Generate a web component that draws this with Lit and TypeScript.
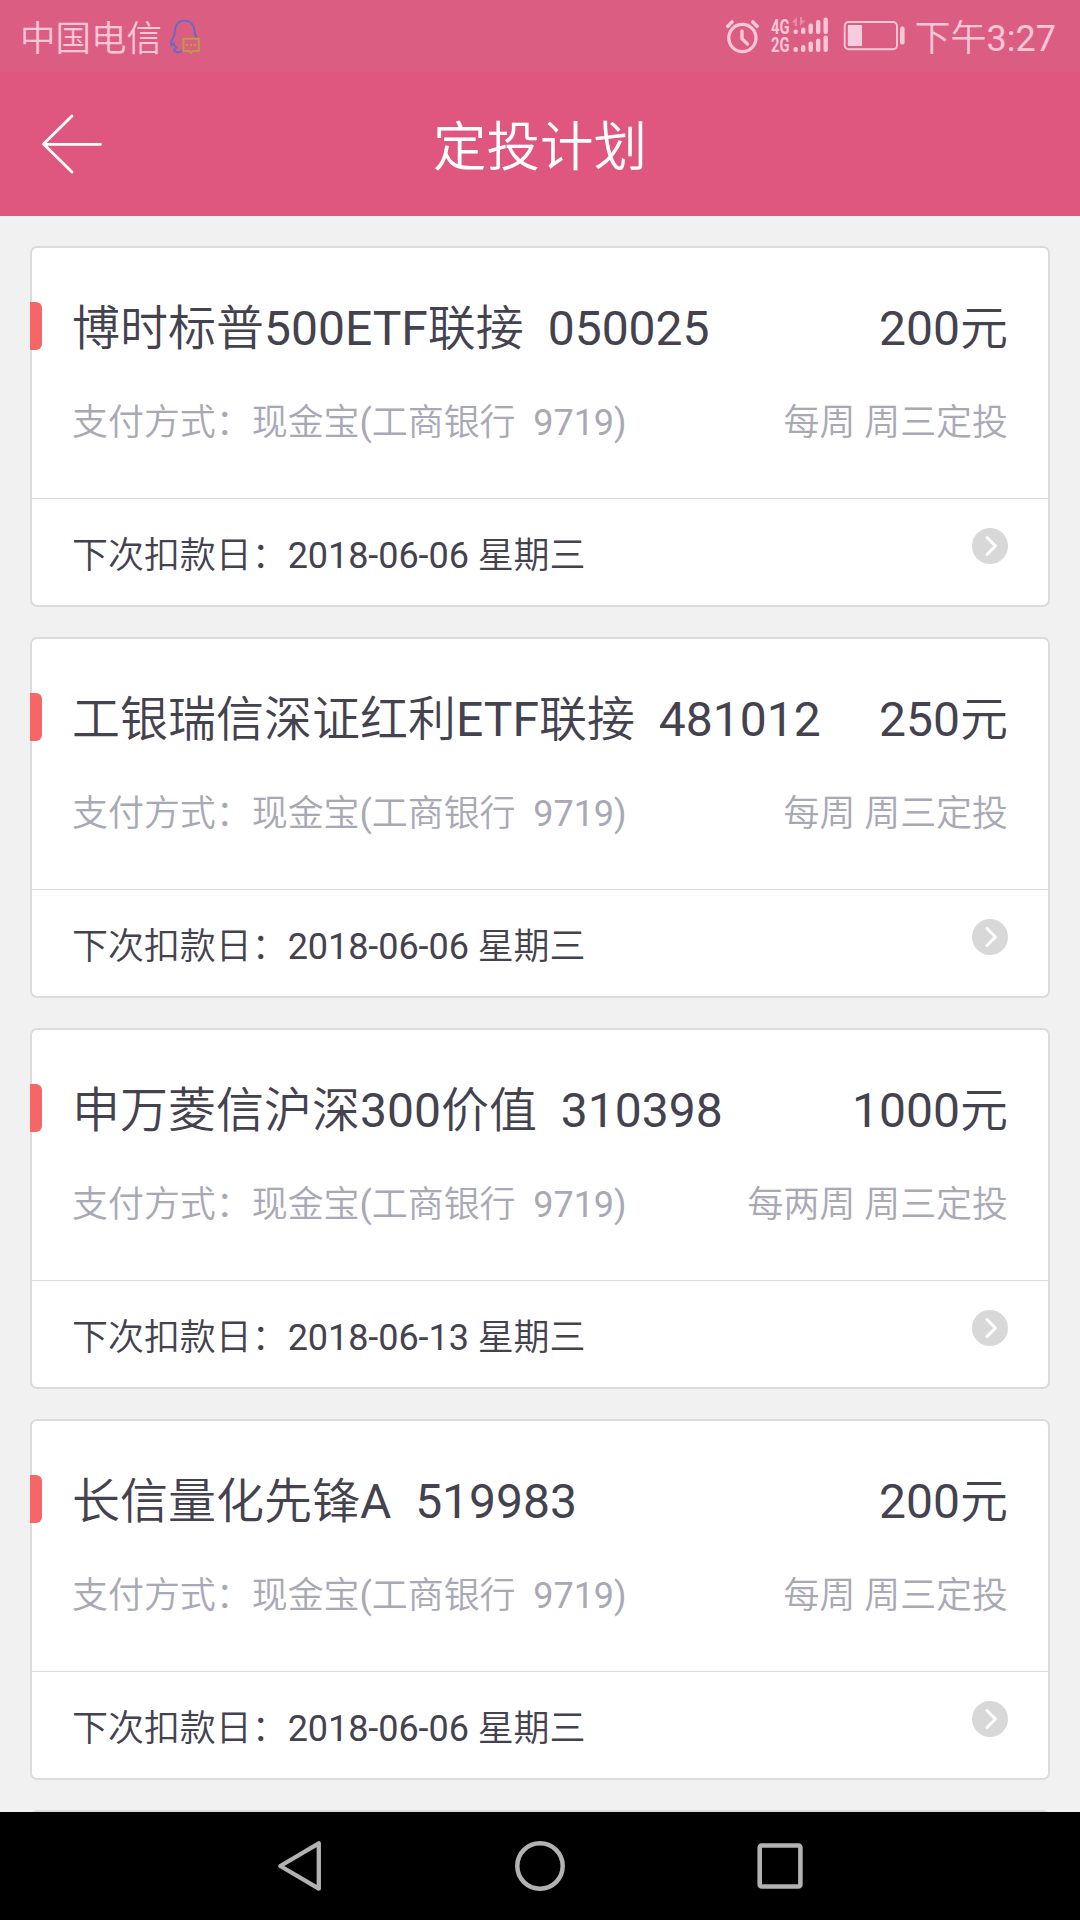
import { LitElement, html, css, svg } from "lit";
import { customElement, property } from "lit/decorators.js";

interface Plan {
  name: string;
  code: string;
  amount: string;
  cycle: string;
  next: string;
}

const PLANS: Plan[] = [
  { name: "博时标普500ETF联接", code: "050025", amount: "200元", cycle: "每周 周三定投", next: "2018-06-06 星期三" },
  { name: "工银瑞信深证红利ETF联接", code: "481012", amount: "250元", cycle: "每周 周三定投", next: "2018-06-06 星期三" },
  { name: "申万菱信沪深300价值", code: "310398", amount: "1000元", cycle: "每两周 周三定投", next: "2018-06-13 星期三" },
  { name: "长信量化先锋A", code: "519983", amount: "200元", cycle: "每周 周三定投", next: "2018-06-06 星期三" },
];

@customElement("status-bar")
class StatusBar extends LitElement {
  static styles = css`
    :host {
      display: flex;
      align-items: center;
      height: 72px;
      padding: 0 24px 0 20px;
      box-sizing: border-box;
      background: #db5d82;
      color: #fbc6d8;
      font-size: 36px;
      line-height: 72px;
    }
    .carrier { font-size: 35.5px; }
    .label { padding-top: 3px; height: 69px; white-space: nowrap; }
    .time { margin-left: 9px; }
    svg { display: block; flex: none; }
    .qq { margin-left: 6px; }
    .spacer { flex: 1; }
    .g { font: 700 19.5px Roboto, sans-serif; fill: #fbc6d8; }
  `;
  render() {
    const bars = [
      [29.5, 27.5, 23.5, 20, 17.5],
      [47, 45, 41.5, 38.5, 35.5],
    ];
    return html`
      <span class="label carrier">中国电信</span>
      <svg class="qq" width="34" height="72" viewBox="168 0 34 72" fill="none" stroke-linejoin="round" stroke-linecap="round">
        <path d="M181.500 51.500 C178 53 174.500 52 174 50 C174 49 176.500 48 176.500 48 C175 46.500 174 44.500 173.800 43 C172.500 45.500 170.800 46 171 43 C171.200 40 173.500 37 174.500 35.500 C174.500 27 177 20.700 184.500 20.700 C192 20.700 194.500 27.500 195 34 L196.500 37" stroke="#5d6ccb" stroke-width="1.800" />
        <path d="M183.500 38.800 H198.800 V51 H193 L191 53 L189.500 51 H183.500 Z" stroke="#bd9a48" stroke-width="1.900" />
        <g fill="#bd9a48"><rect x="186" y="44" width="2" height="2" /><rect x="190" y="44" width="2" height="2" /><rect x="194" y="44" width="2" height="2" /></g>
      </svg>
      <span class="spacer"></span>
      <svg width="180" height="72" viewBox="726 0 180 72" fill="none" stroke="#fbc6d8">
        <circle cx="742.400" cy="38" r="13.600" stroke-width="3.300" />
        <path d="M742 31 V38.800 L747.500 44" stroke-width="3.400" stroke-linecap="round" stroke-linejoin="round" />
        <path d="M727.800 26.300 L732 22 M757 26.300 L752.800 22" stroke-width="3.600" stroke-linecap="round" />
        <g stroke="none">
          <text class="g" x="771" y="33.500" textLength="18.500" lengthAdjust="spacingAndGlyphs">4G</text>
          <text class="g" x="771" y="51.500" textLength="18.500" lengthAdjust="spacingAndGlyphs">2G</text>
          <path d="M791.500 22.500 L797 17 V26 H794.500 V22.500 Z M800 17 H802 V20.500 H805.500 L800 26 Z" fill="#e68aa6" />
          ${bars.map((row, r) => row.map((y, i) => svg`<rect x=${793.5 + i * 7.5} y=${y} width="4.400" height=${(r ? 52 : 34) - y} rx="2" fill="#fbc6d8" />`))}
          <rect x="847.800" y="25" width="14.200" height="21" rx="1" fill="#f4cddc" />
          <rect x="900" y="26.500" width="4.600" height="18" rx="2" fill="#fbc6d8" />
        </g>
        <rect x="844.700" y="22" width="52.300" height="27.200" rx="4" stroke-width="1.900" />
      </svg>
      <span class="label time">下午3:27</span>
    `;
  }
}

@customElement("title-bar")
class TitleBar extends LitElement {
  static styles = css`
    :host {
      display: grid;
      grid-template-columns: 120px 1fr 120px;
      align-items: center;
      height: 144px;
      background: #df577f;
      color: #fff;
    }
    h1 {
      margin: 0;
      padding-top: 8px;
      font-size: 53.500px;
      font-weight: inherit;
      line-height: 72px;
      text-align: center;
    }
    svg { display: block; }
  `;
  render() {
    return html`
      <svg width="120" height="144" viewBox="0 72 120 144" fill="none" stroke="#fff" stroke-width="2.800" stroke-linecap="round" stroke-linejoin="round">
        <path d="M72 116 L43.500 144 L72 172 M43.500 144.300 H100.500" />
      </svg>
      <h1>定投计划</h1>
    `;
  }
}

@customElement("plan-card")
class PlanCard extends LitElement {
  @property({ attribute: false }) plan?: Plan;
  static styles = css`
    :host {
      display: block;
      flex: none;
      height: 361px;
      box-sizing: border-box;
      border: 2px solid #dbdbdb;
      border-radius: 7px;
      background: #fff;
      color: #44424f;
      position: relative;
    }
    span { white-space: pre; }
    .mark {
      position: absolute;
      left: -2px;
      top: 54px;
      width: 12px;
      height: 48px;
      border-radius: 0 6px 6px 0;
      background: #f56767;
    }
    .main {
      height: 251px;
      box-sizing: border-box;
      padding: 45px 40px 0;
      border-bottom: 1px solid #dbdbdb;
    }
    .row { display: flex; justify-content: space-between; }
    .name { font-size: 48px; line-height: 72px; }
    .pay { margin-top: 30px; font-size: 36px; line-height: 56px; color: #a9a8b6; }
    .foot {
      display: flex;
      justify-content: space-between;
      padding: 29px 40px 0;
      font-size: 36px;
      line-height: 56px;
    }
    .pay, .foot { letter-spacing: -0.06px; }
    svg { display: block; }
  `;
  render() {
    const p = this.plan;
    if (!p) return null;
    return html`
      <div class="mark"></div>
      <div class="main">
        <div class="row name"><span>${p.name}  ${p.code}</span><span>${p.amount}</span></div>
        <div class="row pay"><span>支付方式：现金宝(工商银行  9719)</span><span>${p.cycle}</span></div>
      </div>
      <div class="foot">
        <span>下次扣款日：${p.next}</span>
        <svg width="36" height="36" viewBox="0 0 36 36" fill="none">
          <circle cx="18" cy="18" r="18" fill="#d8d8d8" />
          <path d="M15 9.500 L23.500 18 L15 26.500" stroke="#fff" stroke-width="3" stroke-linecap="round" stroke-linejoin="round" />
        </svg>
      </div>
    `;
  }
}

@customElement("nav-bar")
class NavBar extends LitElement {
  static styles = css`
    :host {
      display: flex;
      justify-content: center;
      align-items: center;
      gap: 180px;
      height: 108px;
      background: #000;
    }
    svg { display: block; }
  `;
  render() {
    return html`
      <svg width="60" height="60" viewBox="270 1836 60 60" fill="none" stroke="#b2b2b2" stroke-width="4.300" stroke-linejoin="round">
        <path d="M318.800 1843.300 V1888.700 L280.300 1866 Z" />
      </svg>
      <svg width="60" height="60" viewBox="510 1836 60 60" fill="none" stroke="#b2b2b2" stroke-width="4.500">
        <circle cx="540" cy="1866" r="22.700" />
      </svg>
      <svg width="60" height="60" viewBox="750 1836 60 60" fill="none" stroke="#b2b2b2" stroke-width="4.600">
        <rect x="759.700" y="1845.500" width="40.700" height="41" rx="2" />
      </svg>
    `;
  }
}

@customElement("app-root")
class AppRoot extends LitElement {
  static styles = css`
    :host {
      display: flex;
      flex-direction: column;
      width: 1080px;
      height: 1920px;
      overflow: hidden;
      background: #f1f1f1;
      font-family: Roboto, "Noto Sans CJK SC DemiLight", "Noto Sans CJK SC", sans-serif;
      font-weight: 400;
    }
    status-bar, title-bar, nav-bar { flex: none; }
    .list {
      flex: 1;
      min-height: 0;
      overflow: hidden;
      display: flex;
      flex-direction: column;
      gap: 30px;
      padding: 30px 30px 0;
    }
  `;
  render() {
    return html`
      <status-bar></status-bar>
      <title-bar></title-bar>
      <div class="list">
        ${PLANS.map((p) => html`<plan-card .plan=${p}></plan-card>`)}
        <plan-card></plan-card>
      </div>
      <nav-bar></nav-bar>
    `;
  }
}
